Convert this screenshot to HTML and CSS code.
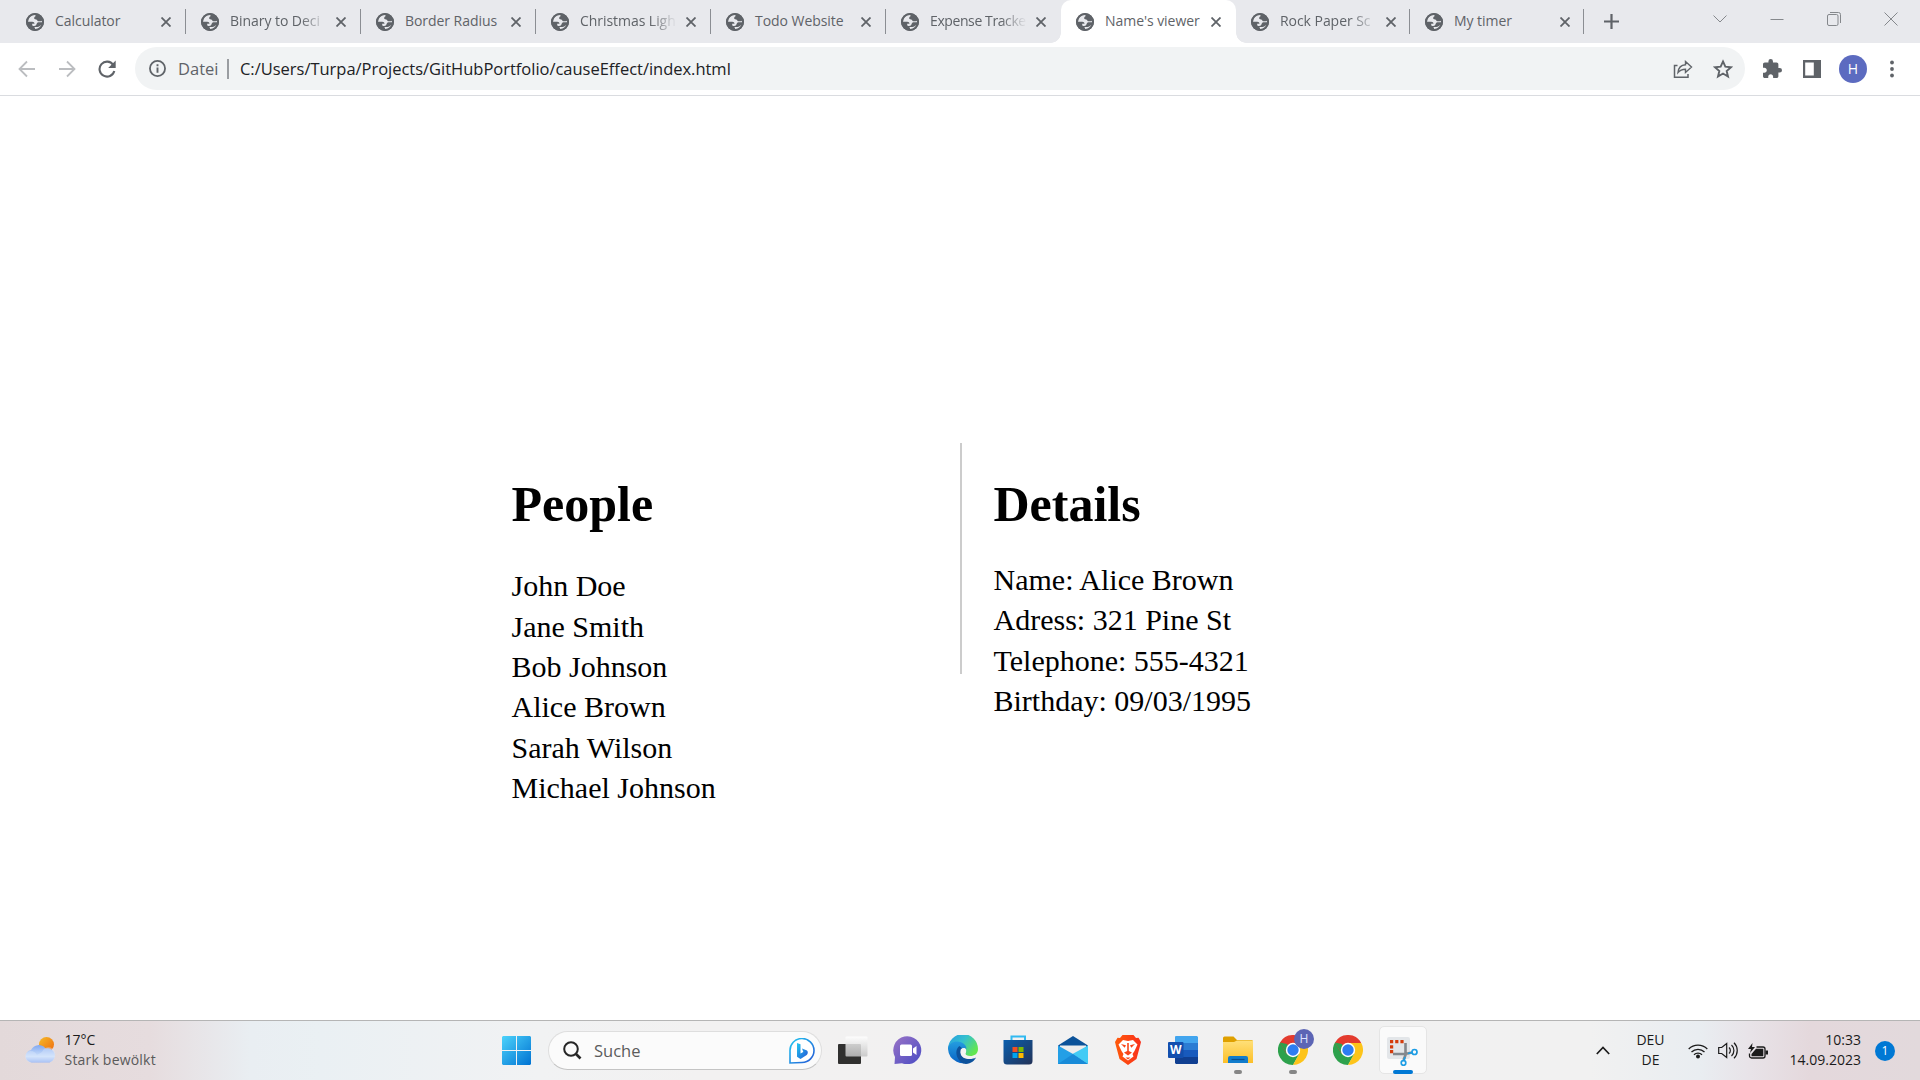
FILE: index.html
```html
<!DOCTYPE html>
<html lang="de">
<head>
<meta charset="utf-8">
<title>Name's viewer</title>
<link rel="stylesheet" href="styles.css">
</head>
<body>
<svg class="defs" width="0" height="0" aria-hidden="true">
  <defs>
    <linearGradient id="win" x1="0" y1="0" x2="1" y2="1"><stop offset="0" stop-color="#4cd3fb"/><stop offset="1" stop-color="#0072d2"/></linearGradient>
    <linearGradient id="cloud" x1="0" y1="0" x2="0" y2="1"><stop offset="0" stop-color="#82a8f0"/><stop offset=".65" stop-color="#cfe2fb"/><stop offset="1" stop-color="#8aaaf0"/></linearGradient>
    <linearGradient id="sun" x1="0" y1="0" x2="1" y2="1"><stop offset="0" stop-color="#f5bb28"/><stop offset="1" stop-color="#ef6a10"/></linearGradient>
    <linearGradient id="bing" x1="0" y1="0" x2="1" y2="1"><stop offset="0" stop-color="#22c8f0"/><stop offset="1" stop-color="#2457d6"/></linearGradient>
    <linearGradient id="chat" x1="0" y1="0" x2="1" y2="1"><stop offset="0" stop-color="#9a73c6"/><stop offset="1" stop-color="#4a4cc4"/></linearGradient>
    <linearGradient id="edgeTop" x1="0" y1="0" x2="1" y2=".6"><stop offset="0" stop-color="#269be2"/><stop offset=".5" stop-color="#35c0cf"/><stop offset="1" stop-color="#62e650"/></linearGradient>
    <linearGradient id="edgeLow" x1="0" y1="0" x2="0" y2="1"><stop offset="0" stop-color="#249de0"/><stop offset="1" stop-color="#0963c4"/></linearGradient>
    <linearGradient id="store" x1="0" y1="0" x2="1" y2="1"><stop offset="0" stop-color="#0a5fae"/><stop offset="1" stop-color="#233257"/></linearGradient>
    <linearGradient id="folder" x1="0" y1="0" x2="0" y2="1"><stop offset="0" stop-color="#ffe07a"/><stop offset="1" stop-color="#fcbf28"/></linearGradient>
    <linearGradient id="brave" x1="0" y1="0" x2="1" y2="0"><stop offset="0" stop-color="#ff5a0a"/><stop offset="1" stop-color="#f9301c"/></linearGradient>
    <linearGradient id="glass" x1="0" y1="0" x2="0" y2="1"><stop offset="0" stop-color="#fff"/><stop offset="1" stop-color="#c4c4c4"/></linearGradient>
    <symbol id="globe" viewBox="0 0 18 18">
      <circle cx="9" cy="9" r="9" fill="#5f6368"/>
      <path d="M9 1.800C5 1.800 2 4.800 1.800 8.800h4.400c1.500 0 2.300.8 2.300 1.900h-2.300v1.400c0 .8.800 1 1.900 1 1.900 0 2.300-1.300 2.600-2.300.4-1.200 1.300-1.600 2.300-1.600h3.200l-.2-1.500c-1 .5-2.500.8-3.600.6-1.400-.2-1.100-1.500-2.300-1.700-1.300-.1-2-.5-1.900-1.500.1-1.100.9-1.300 1.500-2.300z" fill="#e8e9ed"/>
      <path d="M8 14c.8.400 1.200 1 1 2.200 3 .1 5.700-1.800 6.800-4.500-1.700.8-2.700 2.300-4.500 2.300z" fill="#e8e9ed"/>
      <circle cx="9" cy="9" r="8" fill="none" stroke="#5f6368" stroke-width="2"/>
    </symbol>
    <symbol id="close" viewBox="0 0 10 10"><path d="M.5.5l9 9M9.500.5l-9 9" stroke="#5f6368" stroke-width="1.800"/></symbol>
    <symbol id="chrome" viewBox="0 0 30 30">
      <path d="M15 15L2 7.500A15 15 0 0 1 28 7.500z" fill="#e33b2e"/>
      <path d="M15 15L2 7.500A15 15 0 0 0 15 30l6.500-11.300z" fill="#2da14c"/>
      <path d="M15 8h13.300A15 15 0 0 1 15 30l6.300-11.500z" fill="#fdc41a"/>
      <path d="M2 7.500L8.500 19 15 8h13L26 5z" fill="#e33b2e"/>
      <path d="M2 7.500L8.700 18.700 12 17 9 9z" fill="#2da14c"/>
      <circle cx="15" cy="15" r="7.200" fill="#fff"/><circle cx="15" cy="15" r="5.700" fill="#2d7df2"/>
    </symbol>
  </defs>
</svg>
<div class="screen">
  <header class="tabs">
    <div class="tab"><svg class="globe"><use href="#globe"/></svg><span class="name">Calculator</span><svg class="x"><use href="#close"/></svg></div>
    <div class="tab"><svg class="globe"><use href="#globe"/></svg><span class="name fade">Binary to Deci</span><svg class="x"><use href="#close"/></svg></div>
    <div class="tab"><svg class="globe"><use href="#globe"/></svg><span class="name">Border Radius</span><svg class="x"><use href="#close"/></svg></div>
    <div class="tab"><svg class="globe"><use href="#globe"/></svg><span class="name fade">Christmas Ligh</span><svg class="x"><use href="#close"/></svg></div>
    <div class="tab"><svg class="globe"><use href="#globe"/></svg><span class="name">Todo Website</span><svg class="x"><use href="#close"/></svg></div>
    <div class="tab plain"><svg class="globe"><use href="#globe"/></svg><span class="name fade tight">Expense Tracke</span><svg class="x"><use href="#close"/></svg></div>
    <div class="tab active"><svg class="globe"><use href="#globe"/></svg><span class="name">Name's viewer</span><svg class="x"><use href="#close"/></svg></div>
    <div class="tab last"><svg class="globe"><use href="#globe"/></svg><span class="name fade">Rock Paper Sc</span><svg class="x"><use href="#close"/></svg></div>
    <div class="tab last"><svg class="globe"><use href="#globe"/></svg><span class="name">My timer</span><svg class="x"><use href="#close"/></svg></div>
    <svg class="plus" viewBox="0 0 15 15"><path d="M7.500 0v15M0 7.500h15" stroke="#5f6368" stroke-width="2.200"/></svg>
    <div class="winctl">
      <svg width="14" height="14" viewBox="0 0 14 14"><path d="M.5 3.500L7 10l6.500-6.500"/></svg>
      <svg width="14" height="14" viewBox="0 0 14 14"><path d="M.5 7.500h13"/></svg>
      <svg width="14" height="14" viewBox="0 0 14 14"><rect x=".5" y="2.500" width="10.500" height="11" rx="1.500"/><path d="M3 .5h8.500a2 2 0 0 1 2 2V11"/></svg>
      <svg width="14" height="14" viewBox="0 0 14 14"><path d="M.5.500l13 13m0-13l-13 13"/></svg>
    </div>
  </header>
  <nav class="toolbar">
    <svg class="nav" viewBox="0 0 18 18"><path d="M17 9H2M9 1.500L1.500 9 9 16.500" stroke="#bbbdc0" stroke-width="1.800" fill="none"/></svg>
    <svg class="nav" viewBox="0 0 18 18"><path d="M1 9h15M9 1.500L16.500 9 9 16.500" stroke="#bbbdc0" stroke-width="1.800" fill="none"/></svg>
    <svg class="nav" viewBox="0 0 18 18"><path d="M15.200 4.800A7.500 7.500 0 1 0 16.300 11" stroke="#5f6368" stroke-width="2.100" fill="none"/><path d="M17.700.5V8h-7.500z" fill="#5f6368"/></svg>
    <div class="omnibox">
      <svg class="info" viewBox="0 0 16 16"><circle cx="8" cy="8" r="7.100" fill="none" stroke="#5f6368" stroke-width="1.700"/><path d="M8 7v5M8 4v1.800" stroke="#5f6368" stroke-width="1.800"/></svg>
      <span class="scheme">Datei</span>
      <span class="url">C:/Users/Turpa/Projects/GitHubPortfolio/causeEffect/index.html</span>
      <svg class="share" viewBox="0 0 20 18"><path d="M4.500 5.500H1.500v11.700H15V14" fill="none" stroke="#5f6368" stroke-width="1.500"/><path d="M5 12.500C5.500 7.500 8.500 5 12.500 4.800V1.500L18.500 7l-6 5.500V9.200C9.500 9.200 7 10 5 12.500z" fill="none" stroke="#5f6368" stroke-width="1.400"/></svg>
      <svg class="star" viewBox="0 0 18 18"><path d="M9 2.200l2.100 4.700 5.100.5-3.900 3.400 1.200 5L9 13.100l-4.500 2.700 1.200-5L1.800 7.400l5.100-.5z" fill="none" stroke="#5f6368" stroke-width="1.700"/></svg>
    </div>
    <svg class="puzzle" viewBox="2 1 21 21"><path d="M20.500 11H19V7c0-1.100-.9-2-2-2h-4V3.500a2.500 2.500 0 0 0-5 0V5H4c-1.100 0-2 .9-2 2v3.800h1.500c1.500 0 2.700 1.200 2.700 2.700S5 16.200 3.500 16.200H2V20c0 1.100.9 2 2 2h3.800v-1.500c0-1.500 1.200-2.700 2.700-2.700s2.700 1.200 2.700 2.700V22H17c1.100 0 2-.9 2-2v-4h1.500a2.500 2.500 0 0 0 0-5z" fill="#5f6368"/></svg>
    <svg class="panel" viewBox="0 0 18 18"><path d="M0 0h18v18H0zM2.200 2.500v13h8.600v-13z" fill="#5f6368" fill-rule="evenodd"/></svg>
    <div class="avatar">H</div>
    <svg class="dots" viewBox="0 0 4 18"><circle cx="2" cy="2.500" r="1.900"/><circle cx="2" cy="9" r="1.900"/><circle cx="2" cy="15.500" r="1.900"/></svg>
  </nav>
  <main class="page">
    <section class="people">
      <h1>People</h1>
      <ul><li>John Doe</li><li>Jane Smith</li><li>Bob Johnson</li><li>Alice Brown</li><li>Sarah Wilson</li><li>Michael Johnson</li></ul>
    </section>
    <div class="divider"></div>
    <section class="details">
      <h1>Details</h1>
      <p>Name: Alice Brown</p><p>Adress: 321 Pine St</p><p>Telephone: 555-4321</p><p>Birthday: 09/03/1995</p>
    </section>
  </main>
  <footer class="taskbar">
    <div class="weather">
      <svg width="31" height="26" viewBox="0 0 31 26"><circle cx="21.500" cy="7.500" r="7.500" fill="url(#sun)"/><path d="M6.500 25.500a6.300 6.300 0 0 1-.5-12.500A8.500 8.500 0 0 1 20.500 11.500a7 7 0 0 1 4 14z" fill="url(#cloud)"/><path d="M17 15a6 6 0 0 1 13 4c0 3.500-2.500 6.500-6 6.500H7a5.800 5.800 0 0 1-2-11.500c4 0 6 2 7 4" fill="#dbe9fc" opacity=".4"/></svg>
      <div class="lines"><span class="temp">17°C</span><span class="sky">Stark bewölkt</span></div>
    </div>
    <div class="apps">
      <div class="slot"><svg width="29" height="29" viewBox="0 0 29 29"><path d="M1 0h13v14H0V1zM15 0h13l1 1v13H15zM0 15h14v14H1l-1-1zM15 15h14v13l-1 1H15z" fill="url(#win)"/></svg></div>
      <div class="search">
        <svg width="19" height="19" viewBox="0 0 19 19"><circle cx="8" cy="8" r="6.800" fill="none" stroke="#262626" stroke-width="2"/><path d="M12.500 12.500l5 5" stroke="#262626" stroke-width="2.600"/></svg>
        <span>Suche</span>
        <svg class="bing" width="26" height="26" viewBox="0 0 26 26"><path d="M1 25V13A12 12 0 1 1 13 24.500z" fill="#fff" stroke="url(#bing)" stroke-width="1.600"/><path d="M8 5l3.500 1.300v9.200l2.800-1.600-1.300-3.400 5 2c1.200.8 1 3.500-.3 4.400L11.500 21 8 18.700z" fill="url(#bing)"/></svg>
      </div>
      <div class="slot view"><svg width="30" height="28" viewBox="0 0 30 28"><rect y="8" width="23" height="20" rx="1" fill="#30302f"/><rect x="7.500" y=".5" width="22" height="20" rx="1" fill="url(#glass)" opacity=".85"/></svg></div>
      <div class="slot"><svg width="30" height="28" viewBox="0 0 30 28"><path d="M1.500 28l.5-7A14 14 0 1 1 9 27.200z" fill="url(#chat)"/><rect x="7" y="8.500" width="12" height="11.500" rx="1.500" fill="#fff"/><path d="M20 12.500L23.500 10v9L20 16.500z" fill="#fff"/></svg></div>
      <div class="slot"><svg width="30" height="30" viewBox="0 0 30 30"><path d="M0 14A15 15 0 0 1 30 14c0 5-4 7-7.500 7-4 0-6-1.500-5-3 2-3-.5-7-5-7z" fill="url(#edgeTop)"/><path d="M0 14C0 9 5 6.500 9 6.500c6 0 9.500 4 9.500 7.500-2.500-2.500-7 0-6.500 4 .5 5 7 8.500 12 7A15 15 0 0 1 0 14z" fill="url(#edgeLow)"/><path d="M11.500 11c-7 5-1 18 6.500 18 5 0 9-4 10-6.500-4 2.500-15 2.500-15.500-4.500 0-3 2-4.500 2-4.500z" fill="#0d529c"/><path d="M12.500 16c0-3.500 4-3.500 5.300-.7 1.200 2.700-2.300 3.700 1.200 5.700 2.500 1.300 6 .8 8-.3-3.500 4-14.500 2.800-14.500-4.700z" fill="#f3f3f3"/></svg></div>
      <div class="slot"><svg width="30" height="30" viewBox="0 0 30 30"><path d="M8.500 7V1.500h13.500V7" fill="none" stroke="#31baf1" stroke-width="2"/><path d="M.5 5h29v21a3.500 3.500 0 0 1-3.500 3.500H4A3.500 3.500 0 0 1 .5 26z" fill="url(#store)"/><path d="M9.500 12h5v5h-5z" fill="#f25022"/><path d="M15.500 12h5v5h-5z" fill="#7fba00"/><path d="M9.500 18h5v5h-5z" fill="#00a4ef"/><path d="M15.500 18h5v5h-5z" fill="#ffb900"/></svg></div>
      <div class="slot"><svg width="30" height="28" viewBox="0 0 30 28"><path d="M0 9.500L15 0l15 9.500-3 3H3z" fill="#0b5299"/><path d="M2 9.500h26v10H2z" fill="#ededed"/><path d="M0 9.500L15 18 30 28H0z" fill="#239fe6"/><path d="M30 9.500V28L14.500 18z" fill="#42cbf5"/><path d="M0 28l15-10 15 10z" fill="#188bd8"/></svg></div>
      <div class="slot"><svg width="26" height="30" viewBox="0 0 26 30"><path d="M7.500 0h11L21 3l2.500-.3L26 7l-1 4-3.500 13L13 30l-8.500-6L1 11 0 7l2.500-4.300L5 3z" fill="url(#brave)"/><path d="M8 5l5 1 5-1 4.500 4.500-3 6.500-2 3 1 2.500-5.500 4-5.500-4 1-2.500-2-3-3-6.500z" fill="#fff"/><path d="M6 9l5 1.200-1.300 2.600zM20 9l-5 1.200 1.300 2.600zM12.200 8h1.600v8l3.200 1.500-4 3-4-3 3.200-1.500zM10.500 22.500h5L13 24.500z" fill="#f84519"/></svg></div>
      <div class="slot"><svg width="30" height="28" viewBox="0 0 30 28"><path d="M7 1a1 1 0 0 1 1-1h21l1 1v6H7z" fill="#42a5ee"/><path d="M7 7h23v7H7z" fill="#2b7cd3"/><path d="M7 14h23v7H7z" fill="#185abd"/><path d="M7 21h23v6l-1 1H8l-1-1z" fill="#103f91"/><rect y="6" width="15.500" height="16" rx="1" fill="#124fae"/><text x="7.700" y="18.300" text-anchor="middle" class="w">W</text></svg></div>
      <div class="slot open"><svg width="30" height="28" viewBox="0 0 30 28"><path d="M0 2a1.500 1.500 0 0 1 1.500-1.500h9L14 4h15l1 1v7H0z" fill="#dfa000"/><path d="M0 6h11l3-1.500h16V27H0z" fill="url(#folder)"/><path d="M5 27v-5a2 2 0 0 1 2-2h16a2 2 0 0 1 2 2v5z" fill="#117ccc"/><path d="M8.500 23.500h13" stroke="#0b4f8e" stroke-width="1.200"/></svg></div>
      <div class="slot open"><svg width="30" height="30"><use href="#chrome"/></svg><span class="badge">H</span></div>
      <div class="slot"><svg width="30" height="30"><use href="#chrome"/></svg></div>
      <div class="slot current"><div class="tile"><svg width="31" height="31" viewBox="0 0 31 31"><rect x="0" y="2" width="23" height="22" rx="2" fill="#e3e6e9"/><path d="M3 6.600h14" fill="none" stroke="#d43c0c" stroke-width="3.200" stroke-dasharray="3.200 2"/><path d="M4.600 10.200v8" fill="none" stroke="#d43c0c" stroke-width="3.200" stroke-dasharray="3.200 1.600"/><path d="M18.500 8v12l-2 5M6 19h12l7-1.500" fill="none" stroke="#83888d" stroke-width="2.600"/><circle cx="27.500" cy="17" r="2.500" fill="#fafafa" stroke="#1c9de5" stroke-width="1.700"/><circle cx="16.500" cy="28" r="2.300" fill="#fafafa" stroke="#1c9de5" stroke-width="1.700"/><path d="M21 18.500l4-1M18 22l-1 3.500" stroke="#1c9de5" stroke-width="1.800"/></svg></div></div>
    </div>
    <div class="tray">
      <svg class="up" width="14" height="9" viewBox="0 0 14 9"><path d="M.8 8L7 1.500 13.200 8" fill="none" stroke="#1b1b1b" stroke-width="1.700"/></svg>
      <div class="lang"><span>DEU</span><span>DE</span></div>
      <svg class="wifi" width="20" height="16" viewBox="0 0 20 16"><g fill="none" stroke="#1b1b1b" stroke-width="1.300"><path d="M.7 6a13 13 0 0 1 18.600 0M3.500 9a9.200 9.200 0 0 1 13 0M6 11.700a5.700 5.700 0 0 1 8 0"/></g><circle cx="10" cy="13.500" r="2" fill="#1b1b1b"/></svg>
      <svg class="vol" width="20" height="17" viewBox="0 0 20 17"><g fill="none" stroke="#1b1b1b" stroke-width="1.200"><path d="M.7 5.500h3l5-4v14l-5-4h-3zM11 5.500a4 4 0 0 1 0 6M13.500 3a7.500 7.500 0 0 1 0 11M16 .7a11 11 0 0 1 0 15.600"/></g></svg>
      <svg class="bat" width="20" height="16" viewBox="0 0 20 16"><path d="M8.500 4H15a2 2 0 0 1 2 2v7a2 2 0 0 1-2 2H3.500a2 2 0 0 1-2-2v-2.500" fill="none" stroke="#1b1b1b" stroke-width="1.300"/><path d="M8 5.800h7.300v7.400H3.500V11z" fill="#1b1b1b"/><path d="M17.500 7.500H20v4h-2.500z" fill="#1b1b1b"/><path d="M4.500 0L0 6h3L2 10l5-6H4z" fill="#1b1b1b"/></svg>
      <div class="clock"><span>10:33</span><span>14.09.2023</span></div>
      <div class="count">1</div>
    </div>
  </footer>
</div>
</body>
</html>
```
FILE: styles.css
```css
* { box-sizing: border-box; }
body { margin: 0; background: #fff; font-family: "Open Sans", "Noto Sans", sans-serif; }
svg { display: block; flex: none; }
.defs { position: absolute; }
.screen { display: flex; flex-direction: column; width: 1920px; height: 1080px; overflow: hidden; }

.tabs { display: flex; align-items: center; height: 43px; padding-left: 11px; background: #e8e9ed; flex: none; }
.tab { display: flex; align-items: center; width: 175px; height: 43px; padding-left: 15px; flex: none; position: relative; }
.last { width: 174px; }
.tab:not(.plain):not(.active)::after { content: ""; position: absolute; right: 0; top: 9px; width: 1px; height: 25px; background: #8b8e93; }
.globe { width: 18px; height: 18px; margin-right: 11px; }
.name { width: 98px; margin-right: 8px; padding-bottom: 1px; font-size: 14px; line-height: 20px; letter-spacing: -.05px; color: #5f6368; white-space: nowrap; }
.fade { mask-image: linear-gradient(90deg, #000 72%, transparent 99%); -webkit-mask-image: linear-gradient(90deg, #000 72%, transparent 99%); }
.tight { letter-spacing: -.4px; }
.x { width: 10px; height: 10px; }
.active { background: #fff; border-radius: 10px 10px 0 0; }
.active::before, .active::after { content: ""; position: absolute; bottom: 0; width: 10px; height: 10px; }
.active::before { left: -10px; background: radial-gradient(circle at 0 0, transparent 9.5px, #fff 10px); }
.active::after { right: -10px; background: radial-gradient(circle at 100% 0, transparent 9.5px, #fff 10px); }
.plus { width: 15px; height: 15px; margin-left: 19.500px; }
.winctl { display: flex; gap: 43.300px; margin-left: 94px; padding-bottom: 6px; fill: none; stroke: #85888c; stroke-width: 1; }

.toolbar { display: flex; align-items: center; height: 53px; padding: 0 0 1px 18px; border-bottom: 1px solid #dadce0; flex: none; }
.nav { width: 18px; height: 18px; margin-right: 22px; }
.omnibox { display: flex; align-items: center; width: 1610px; height: 43px; margin-left: -3px; padding-left: 14px; border-radius: 22px; background: #f1f3f4; font-size: 16.500px; line-height: 24px; }
.info { width: 17px; height: 17px; margin-right: 12px; }
.scheme { width: 51px; margin-right: 11px; border-right: 2px solid #9a9da1; line-height: 20px; color: #5f6368; }
.url { width: 1433px; color: #202124; letter-spacing: -.02px; white-space: nowrap; }
.share { width: 20px; height: 18px; }
.star { width: 20px; height: 20px; margin-left: 20px; }
.puzzle { width: 19px; height: 19px; margin-left: 18px; }
.panel { width: 18px; height: 18px; margin-left: 21px; }
.avatar { width: 28px; height: 28px; margin-left: 18px; border-radius: 50%; background: #5c6bc0; color: #fff; font-size: 14px; line-height: 28px; text-align: center; }
.dots { width: 4px; height: 18px; margin-left: 23px; fill: #5f6368; }

.page { display: flex; flex: 1; padding: 347px 0 0 511.500px; font-family: "Liberation Serif", serif; color: #000; }
.people { width: 448.500px; padding-top: 33px; }
.page h1 { margin: 0; font-size: 50px; line-height: 56px; }
.people ul { margin: 34.300px 0 0; padding: 0; list-style: none; }
.people li, .details p { margin: 0; font-size: 30px; line-height: 40.330px; }
.divider { width: 2px; height: 231px; background: #ccc; }
.details { padding: 33px 0 0 31.500px; }
.details h1 { margin-bottom: 28px; }

.taskbar { display: flex; height: 60px; border-top: 1px solid #b5b5b5; background: linear-gradient(90deg, #e3d9da 0, #e6dcde 150px, #e9eef2 250px, #eaf0f3 320px, #f1f2f3 540px, #f2f1f1 700px, #f1f1f1 1590px, #e9edf1 1700px, #e8e3e8 1750px, #e4d8dc 1810px, #e2d9dc 1920px); flex: none; color: #1b1b1b; font-size: 14px; line-height: 20px; }
.weather { display: flex; width: 489px; padding-left: 25px; }
.weather svg { margin: 16px 8.500px 0 0; }
.lines, .lang, .clock { display: flex; flex-direction: column; padding-top: 9px; }
.sky { color: #5a5a5a; letter-spacing: .2px; }
.apps { display: flex; align-items: center; width: 941px; }
.slot { display: flex; align-items: center; justify-content: center; position: relative; width: 55px; height: 59px; padding-bottom: 1px; flex: none; }
.search { display: flex; align-items: center; width: 274px; height: 39px; margin: 0 3px 0 4px; padding: 0 6px 0 14px; border: 1px solid #dedede; border-bottom-color: #c4c4c4; border-radius: 20px; background: #fbfbfb; flex: none; font-size: 16.500px; color: #5c5c5c; }
.search span { flex: 1; margin-left: 12px; }
.open::after, .current::after { content: ""; position: absolute; bottom: 6px; width: 8px; height: 4px; border-radius: 2px; background: #868686; }
.current::after { width: 20px; background: #0078d4; }
.badge { position: absolute; left: 29px; top: 8px; width: 20px; height: 20px; border-radius: 50%; background: #5c65b5; color: #dfe3ff; font-size: 12px; line-height: 20px; text-align: center; }
.tile { display: flex; align-items: center; justify-content: center; width: 48px; height: 48px; border: 1px solid #e5e5e5; border-radius: 5px; background: #fafafa; }
.w { font: bold 12px "Open Sans", sans-serif; fill: #fff; }
.tray { display: flex; align-items: center; flex: 1; padding-left: 166px; }
.lang { width: 40px; height: 59px; margin-left: 20.500px; text-align: center; }
.wifi { margin-left: 17.500px; }
.vol { margin-left: 10px; }
.bat { margin-left: 10px; }
.clock { width: 80px; height: 59px; margin-left: 13px; text-align: right; }
.count { width: 20px; height: 20px; margin-left: 14px; border-radius: 50%; background: #0078d4; color: #fff; font-size: 12px; line-height: 20px; text-align: center; }
```
